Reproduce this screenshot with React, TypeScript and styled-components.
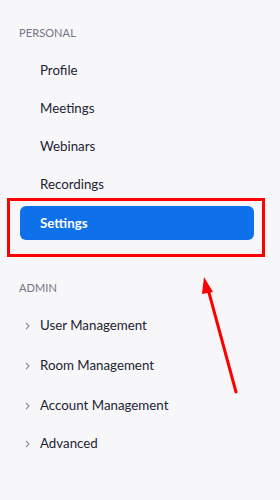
import React from "react";
import styled, { createGlobalStyle } from "styled-components";

const GlobalStyle = createGlobalStyle`
  html, body {
    margin: 0;
    padding: 0;
    background: #f7f7fa;
  }
  body {
    font-family: Lato, "Open Sans", sans-serif;
  }
`;

const Sidebar = styled.nav`
  position: relative;
  width: 280px;
  height: 500px;
  box-sizing: border-box;
  padding: 26px 15px 0 7px;
  background: #f7f7fa;
  overflow: hidden;
`;

const SectionLabel = styled.div<{ $top?: number }>`
  padding-left: 12px;
  margin-top: ${(p) => p.$top ?? 0}px;
  font-size: 11px;
  line-height: 14px;
  letter-spacing: 0.1px;
  text-transform: uppercase;
  color: #747487;
`;

const List = styled.ul<{ $top: number }>`
  list-style: none;
  margin: ${(p) => p.$top}px 0 0;
  padding: 0;
`;

const Item = styled.li<{ $h: number }>`
  display: flex;
  align-items: center;
  height: ${(p) => p.$h}px;
  padding-left: 33px;
  font-size: 13.3px;
  color: #232333;
  position: relative;
`;

const Chevron = styled.span`
  position: absolute;
  left: 18px;
  top: 50%;
  width: 5px;
  height: 8px;
  margin-top: -3px;
  display: flex;
`;

const Highlight = styled.div`
  margin-top: -5px;
  border: 3px solid #ff0000;
  padding: 5px 8px 14px 10px;
`;

const ActiveButton = styled.div`
  display: flex;
  align-items: center;
  height: 34px;
  padding-left: 20px;
  border-radius: 6px;
  background: #0e71eb;
  color: #ffffff;
  font-size: 13.3px;
  font-weight: 700;
`;

const Arrow = styled.svg`
  position: absolute;
  left: 0;
  top: 0;
  pointer-events: none;
`;

const personal = ["Profile", "Meetings", "Webinars", "Recordings"];
const admin = [
  { label: "User Management", h: 40 },
  { label: "Room Management", h: 40 },
  { label: "Account Management", h: 39 },
  { label: "Advanced", h: 38 },
];

const ChevronIcon = () => (
  <Chevron>
    <svg width="5" height="8" viewBox="0 0 5 8">
      <path d="M1 1 L4 4 L1 7" fill="none" stroke="#8c8c9a" strokeWidth="1.1" />
    </svg>
  </Chevron>
);

export default function App() {
  return (
    <>
      <GlobalStyle />
      <Sidebar>
        <SectionLabel>Personal</SectionLabel>
        <List $top={11}>
          {personal.map((p) => (
            <Item key={p} $h={38}>
              {p}
            </Item>
          ))}
        </List>
        <Highlight>
          <ActiveButton>Settings</ActiveButton>
        </Highlight>
        <SectionLabel $top={24}>Admin</SectionLabel>
        <List $top={10}>
          {admin.map((a) => (
            <Item key={a.label} $h={a.h}>
              <ChevronIcon />
              {a.label}
            </Item>
          ))}
        </List>
        <Arrow width="280" height="500" viewBox="0 0 280 500">
          <line x1="236" y1="392" x2="208" y2="289" stroke="#ff0000" strokeWidth="3" strokeLinecap="round" />
          <polygon points="204,277 213,292 202,294" fill="#ff0000" />
        </Arrow>
      </Sidebar>
    </>
  );
}
